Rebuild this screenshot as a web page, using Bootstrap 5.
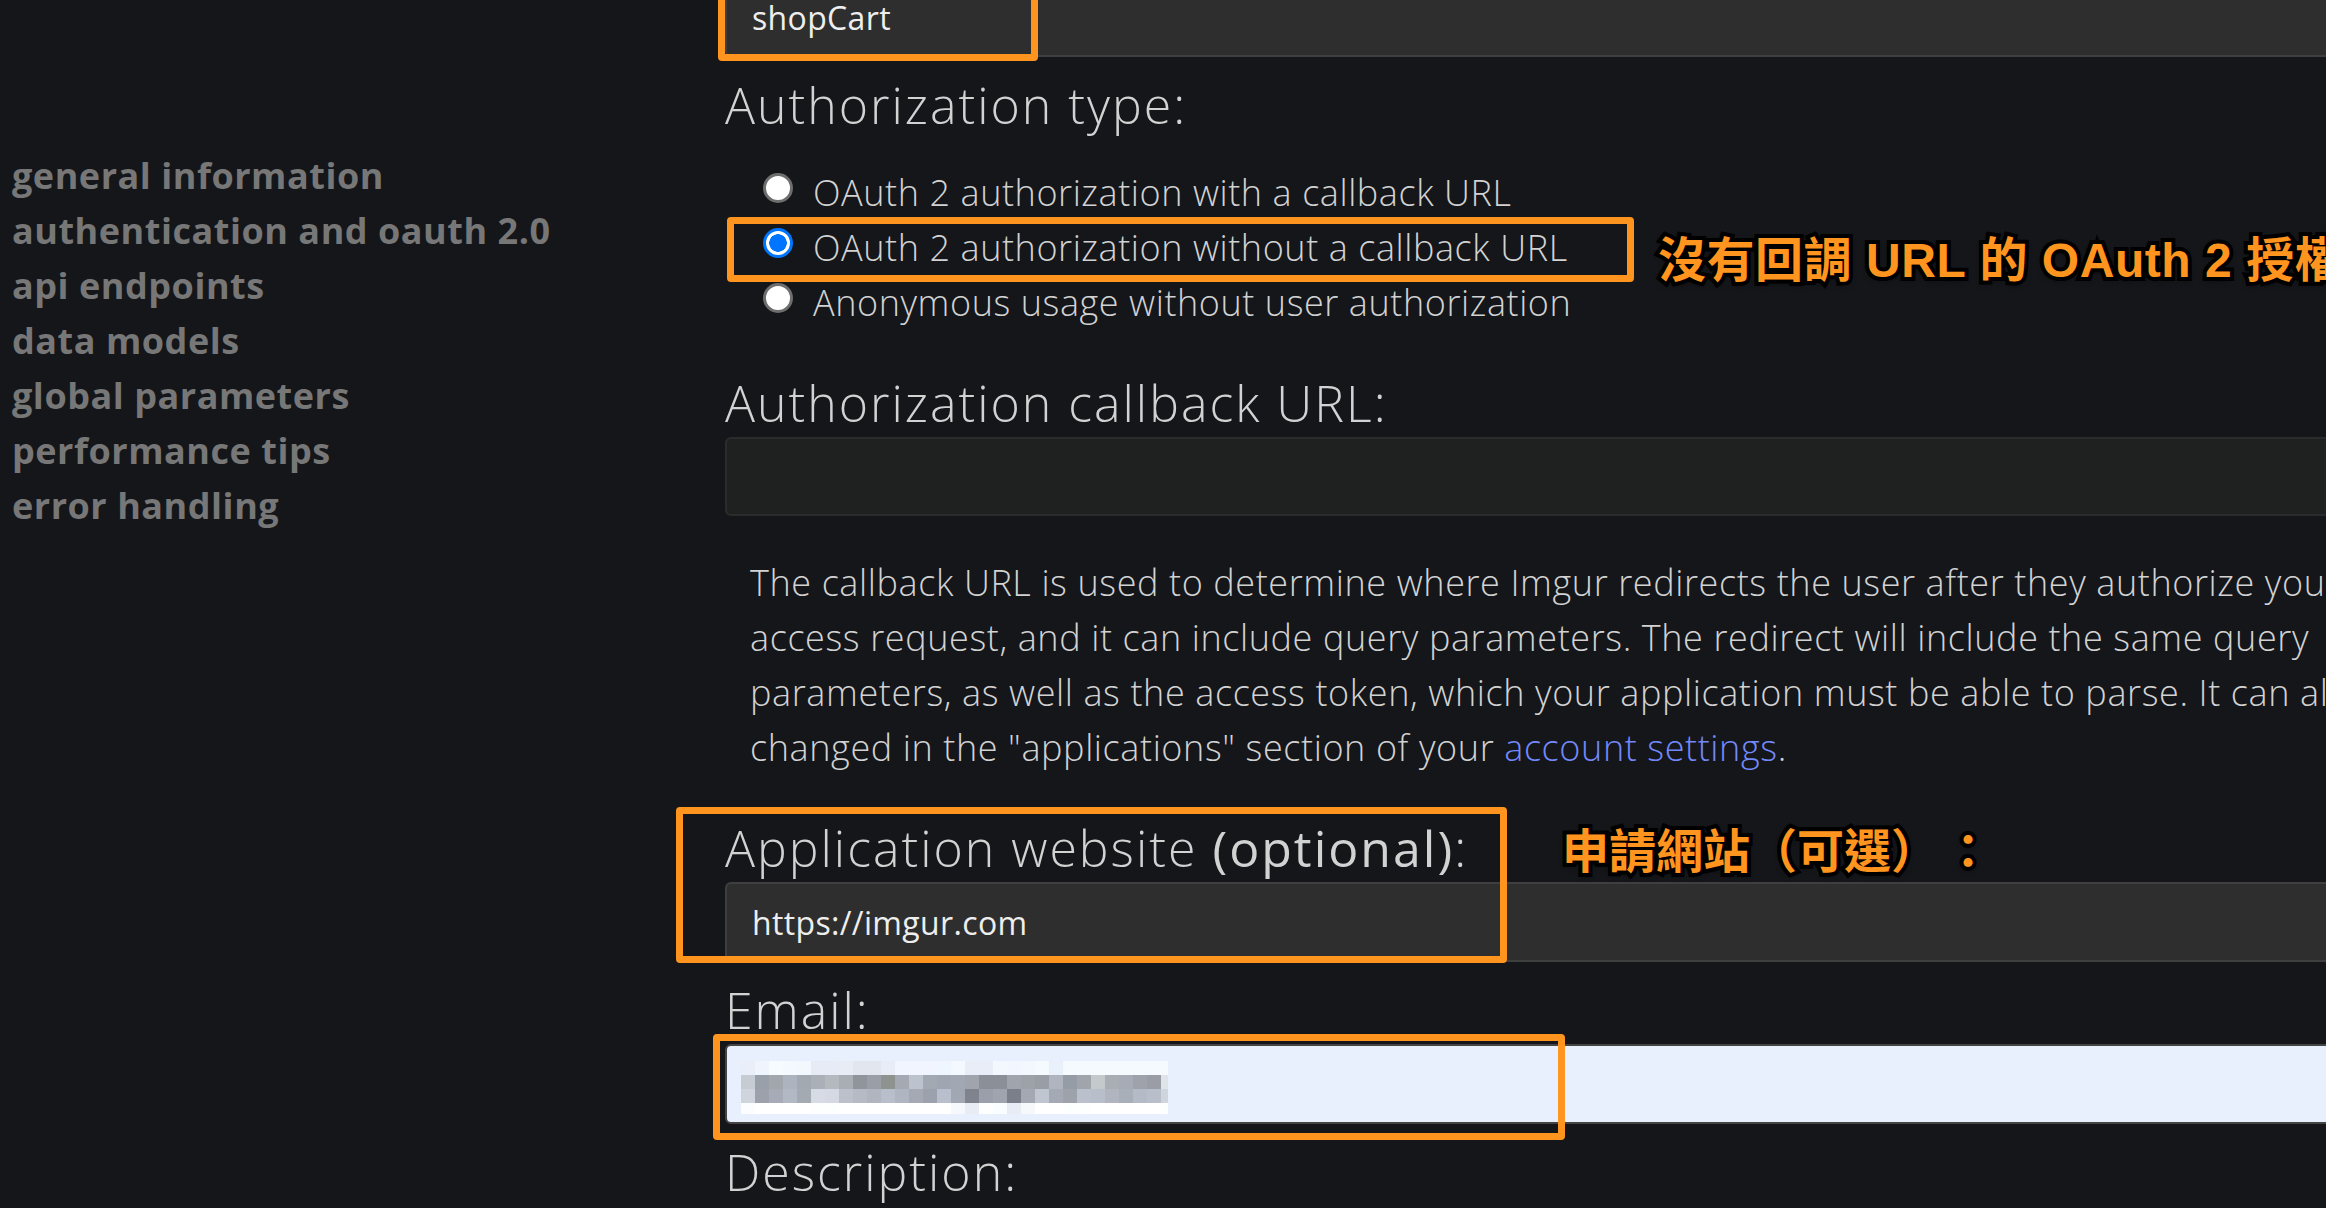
<!DOCTYPE html>
<html lang="en">
<head>
    <meta charset="UTF-8">
    <meta name="viewport" content="width=device-width, initial-scale=1.0">
    <title>Register an Application</title>
    <link href="https://cdn.jsdelivr.net/npm/bootstrap@5.3.0/dist/css/bootstrap.min.css" rel="stylesheet">
    <style>
        body {
            background: #14161a;
            color: #d2d2d2;
            font-family: "Open Sans", "Noto Sans CJK TC", sans-serif;
            font-weight: 300;
            overflow: hidden;
            height: 1208px;
        }
        .page-wrap { width: 2326px; height: 1208px; overflow: hidden; }
        .side-links { width: 725px; flex: none; padding: 148px 0 0 12px; margin: 0; }
        .side-links li { font-size: 36px; font-weight: 700; line-height: 55px; letter-spacing: .53px; color: #777; }
        .form-col { width: 1700px; flex: none; margin-top: -23px; }
        .field-label { display: block; font-size: 50px; line-height: 54px; letter-spacing: 2px; color: #d2d2d2; margin-bottom: 7px; }
        .field-label strong { font-weight: 400; }
        .top-label { margin: 21px 0 0; }
        .dark-input.form-control {
            height: 80px; border: 2px solid #3f3f3f; border-radius: 6px;
            background: #2e2e2e; color: #eee;
            font-size: 32px; font-weight: 400; letter-spacing: .35px; padding: 0 25px;
        }
        .dark-input.form-control:disabled { height: 79px; background: #1f2120; border-color: #2a2c2c; }
        .dark-input.form-control.autofilled { background: #e8f0fe; border-color: #444; }
        .radio-group { margin: 31px 0 48px 38px; }
        .radio-group .form-check { display: flex; align-items: flex-start; min-height: 0; height: 55px; padding: 0; margin: 0; }
        .radio-group .form-check-label { font-size: 36px; line-height: 55px; letter-spacing: .57px; margin: 2px 0 0 20px; white-space: nowrap; }
        .radio-group .form-check-input {
            float: none; width: 30px; height: 30px; margin: 10px 0 0; flex: none;
            background: #fff; border: 3px solid #6e6e6e; opacity: 1;
        }
        .radio-group .form-check-input:checked {
            background: radial-gradient(circle, #0075ff 0 8.5px, #fff 9px 12px);
            border: 3px solid #0075ff;
        }
        .help-text { margin: 39px 0 46px 25px; font-size: 36px; line-height: 55px; letter-spacing: .6px; white-space: nowrap; }
        .help-text a { color: #7389fa; text-decoration: none; }
        .email-wrap { position: relative; margin-bottom: 21px; }
        .email-blur { position: absolute; left: 16px; top: 17px; }
        .site-block { margin-bottom: 21px; }
        .note-box { position: absolute; border: 7px solid #ff951e; border-radius: 4px; }
        .note-shop { left: 718px; top: -10px; width: 320px; height: 71px; }
        .note-radio { left: 727px; top: 217px; width: 907px; height: 65px; }
        .note-site { left: 676px; top: 807px; width: 831px; height: 156px; }
        .note-email { left: 713px; top: 1034px; width: 852px; height: 106px; }
        .note-text {
            position: absolute; white-space: nowrap; margin: 0;
            font-family: "Liberation Sans", "Noto Sans CJK TC", sans-serif;
            font-size: 48px; line-height: 60px; font-weight: 700; letter-spacing: .55px; color: #ff951e;
            -webkit-text-stroke: 8px #000; paint-order: stroke fill;
            text-shadow: 0 3px 6px rgba(0, 0, 0, .6);
        }
        .note-oauth { left: 1658px; top: 231px; }
        .note-apply { left: 1562px; top: 822px; font-size: 47px; letter-spacing: 0; }
        .note-colon { margin-left: 30px; }
    </style>
</head>
<body>
    <div class="page-wrap position-relative">
        <div class="d-flex">
            <!-- Sidebar -->
            <ul class="side-links list-unstyled">
                <li>general information</li>
                <li>authentication and oauth 2.0</li>
                <li>api endpoints</li>
                <li>data models</li>
                <li>global parameters</li>
                <li>performance tips</li>
                <li>error handling</li>
            </ul>

            <!-- Form -->
            <form class="form-col">
                <input type="text" class="form-control dark-input" value="shopCart">

                <label class="field-label top-label">Authorization type:</label>
                <div class="radio-group">
                    <div class="form-check">
                        <input class="form-check-input" type="radio" name="authType" id="authCallback">
                        <label class="form-check-label" for="authCallback">OAuth 2 authorization with a callback URL</label>
                    </div>
                    <div class="form-check">
                        <input class="form-check-input" type="radio" name="authType" id="authNoCallback" checked>
                        <label class="form-check-label" for="authNoCallback">OAuth 2 authorization without a callback URL</label>
                    </div>
                    <div class="form-check">
                        <input class="form-check-input" type="radio" name="authType" id="authAnon">
                        <label class="form-check-label" for="authAnon">Anonymous usage without user authorization</label>
                    </div>
                </div>

                <label class="field-label">Authorization callback URL:</label>
                <input type="text" class="form-control dark-input" disabled>

                <p class="help-text">
                    The callback URL is used to determine where Imgur redirects the user after they authorize your app's<br>
                    access request, and it can include query parameters. The redirect will include the same query<br>
                    parameters, as well as the access token, which your application must be able to parse. It can always be<br>
                    changed in the "applications" section of your <a href="#">account settings</a>.
                </p>

                <div class="site-block">
                    <label class="field-label">Application website <strong>(optional)</strong>:</label>
                    <input type="text" class="form-control dark-input" value="https://imgur.com">
                </div>

                <label class="field-label">Email:</label>
                <div class="email-wrap">
                    <input type="text" class="form-control dark-input autofilled">
                    <svg class="email-blur" id="emailBlur" width="427" height="53" viewBox="0 0 427 53"></svg>
                </div>

                <label class="field-label">Description:</label>
            </form>
        </div>

        <!-- Annotations drawn over the screenshot -->
        <div class="note-box note-shop"></div>
        <div class="note-box note-radio"></div>
        <div class="note-box note-site"></div>
        <div class="note-box note-email"></div>
        <p class="note-text note-oauth" lang="zh-TW">沒有回調 URL 的 OAuth 2 授權</p>
        <p class="note-text note-apply" lang="zh-TW">申請網站（可選）<span class="note-colon">：</span></p>
    </div>

    <script src="https://cdn.jsdelivr.net/npm/bootstrap@5.3.0/dist/js/bootstrap.bundle.min.js"></script>
    <script>
        // mosaic over the email address, one string per row
        const rows = [
            'e9eef8 f0f4fd f5fbff f4f9ff f3f8ff e6ebf5 e6ebf5 e8ecf4 e2e6ee e2e6ef e7ecf7 f0f5ff f0f5ff f0f5ff f0f6ff f4f9ff e8edf7 e8edf7 f3f8ff f2f7ff f3f8ff f5faff e8f0f9 f5faff f5faff f5faff f5faff f5faff f5faff f5faff f5faff',
            'c6ccd2 9aa0aa a2a7ad aeb4bf a2a9b0 abafb7 b4b8bf a9adb4 90949b 9a9ea6 8f938f a5a9b1 bcc3ce a3a9b2 9fa6b1 a1a8b3 a0a4ad 8b8f98 8b8f98 a0a4ad 9da2a9 999da5 b0b4bf 969ca6 a0a4ab c4c9cb a9adb4 a6abb5 9ea3ab 9a9da5 dfe3ea',
            'd0d4dd 9ca1ac a6abb7 b3b8c5 a3aab1 d6dbe6 d4d9e4 bbc0cb b5bac5 b0b5c0 b9becb b0b5c2 a5a9b3 9da1ad b9bfcc a2a8b3 7f838d 9a9fab a0a4ae 7b7f89 a3a8b2 c0c5d2 a5a9b3 9da2ab bac0cc b9becb b0b5c0 a9afb9 b5bac7 b9becb d0d4dd',
            'fbfdff ffffff ffffff ffffff ffffff fdffff fdffff ffffff ffffff ffffff ffffff ffffff ffffff ffffff ffffff f5f8fc e8ecf5 fdffff fafdff e8ecf5 f6f9fc ffffff ffffff fdffff fdffff ffffff ffffff ffffff ffffff ffffff fdffff'
        ];
        const blur = document.getElementById('emailBlur');
        let rects = '';
        rows.forEach((row, y) => {
            row.split(' ').forEach((color, x) => {
                const w = x === 30 ? 7 : 14;
                const h = y === 3 ? 11 : 14;
                rects += `<rect x="${x * 14}" y="${y * 14}" width="${w}" height="${h}" fill="#${color}"/>`;
            });
        });
        blur.innerHTML = rects;
    </script>
</body>
</html>
